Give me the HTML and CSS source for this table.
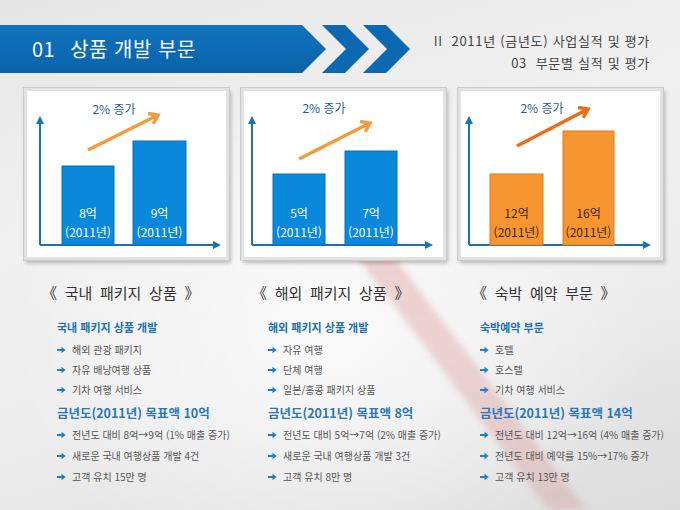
FILE: index.html
```html
<!DOCTYPE html>
<html lang="ko">
<head>
<meta charset="utf-8">
<title>01 상품 개발 부문</title>
<link rel="stylesheet" href="styles.css">
</head>
<body>
<div class="page">
  <div class="deco"><div class="band"></div></div>

  <header class="header">
    <div class="title-bar"><h1><span class="num">01</span>상품 개발 부문</h1></div>
    <svg class="chevrons" width="88" height="48" viewBox="0 0 88 48">
      <polygon points="0,0 23,0 47,24 23,48 0,48 24,24"/>
      <polygon points="41,0 64,0 88,24 64,48 41,48 65,24"/>
    </svg>
    <div class="crumbs">
      <p>II&nbsp; 2011년 (금년도) 사업실적 및 평가</p>
      <p>03&nbsp; 부문별 실적 및 평가</p>
    </div>
  </header>

  <section class="charts">
    <div class="chart">
      <svg width="199" height="166" viewBox="0 0 199 166">
        <g class="axis">
          <line x1="13" y1="28" x2="13" y2="154"/>
          <line x1="13" y1="154" x2="191" y2="154"/>
        </g>
        <polygon class="axis-head" points="9,33 13,25 17,33"/>
        <polygon class="axis-head" points="186,150 194,154 186,158"/>
        <rect class="bar" x="35" y="75" width="52" height="79"/>
        <rect class="bar" x="106" y="50" width="53" height="104"/>
        <text class="bar-text" x="61" y="127">8억</text>
        <text class="bar-text" x="61" y="146">(2011년)</text>
        <text class="bar-text" x="132.5" y="127">9억</text>
        <text class="bar-text" x="132.5" y="146">(2011년)</text>
        <text class="label" x="87" y="23">2% 증가</text>
        <line class="trend" x1="61" y1="59" x2="130" y2="24.5"/>
        <polyline class="trend" points="121.1,22.5 131,24 126.3,32.8"/>
      </svg>
    </div>
    <div class="chart">
      <svg width="199" height="166" viewBox="0 0 199 166">
        <g class="axis">
          <line x1="8" y1="28" x2="8" y2="154"/>
          <line x1="8" y1="154" x2="186" y2="154"/>
        </g>
        <polygon class="axis-head" points="4,33 8,25 12,33"/>
        <polygon class="axis-head" points="181,150 189,154 181,158"/>
        <rect class="bar" x="29" y="83" width="52" height="71"/>
        <rect class="bar" x="101" y="60" width="52" height="94"/>
        <text class="bar-text" x="55" y="127">5억</text>
        <text class="bar-text" x="55" y="146">(2011년)</text>
        <text class="bar-text" x="127" y="127">7억</text>
        <text class="bar-text" x="127" y="146">(2011년)</text>
        <text class="label" x="80" y="22">2% 증가</text>
        <line class="trend" x1="55" y1="68" x2="125" y2="32.5"/>
        <polyline class="trend" points="116.1,30.5 126,32 121.3,40.8"/>
      </svg>
    </div>
    <div class="chart">
      <svg width="199" height="166" viewBox="0 0 199 166">
        <g class="axis">
          <line x1="8" y1="28" x2="8" y2="154"/>
          <line x1="8" y1="154" x2="187" y2="154"/>
        </g>
        <polygon class="axis-head" points="4,33 8,25 12,33"/>
        <polygon class="axis-head" points="182,150 190,154 182,158"/>
        <rect class="bar bar--orange" x="29" y="83" width="53" height="71"/>
        <rect class="bar bar--orange" x="102" y="40" width="51" height="114"/>
        <text class="bar-text bar-text--dark" x="55.5" y="127">12억</text>
        <text class="bar-text bar-text--dark" x="55.5" y="146">(2011년)</text>
        <text class="bar-text bar-text--dark" x="127.5" y="127">16억</text>
        <text class="bar-text bar-text--dark" x="127.5" y="146">(2011년)</text>
        <text class="label" x="81" y="22">2% 증가</text>
        <line class="trend trend--dark" x1="56" y1="55" x2="126" y2="18.5"/>
        <polyline class="trend trend--dark" points="117.1,16.5 127,18 122.3,26.8"/>
      </svg>
    </div>
  </section>

  <section class="details">
    <div class="col">
      <h2 class="col-title col-title--a">《 국내 패키지 상품 》</h2>
      <h3 class="sub">국내 패키지 상품 개발</h3>
      <ul class="list">
        <li><svg class="bullet" viewBox="0 0 10 8"><path d="M0 2.8h5V0.3L9.6 4 5 7.7V5.2H0z"/></svg>해외 관광 패키지</li>
        <li><svg class="bullet" viewBox="0 0 10 8"><path d="M0 2.8h5V0.3L9.6 4 5 7.7V5.2H0z"/></svg>자유 배낭여행 상품</li>
        <li><svg class="bullet" viewBox="0 0 10 8"><path d="M0 2.8h5V0.3L9.6 4 5 7.7V5.2H0z"/></svg>기차 여행 서비스</li>
      </ul>
      <h3 class="goal">금년도(2011년) 목표액 10억</h3>
      <ul class="list list--goal">
        <li><svg class="bullet" viewBox="0 0 10 8"><path d="M0 2.8h5V0.3L9.6 4 5 7.7V5.2H0z"/></svg>전년도 대비 8억→9억 (1% 매출 증가)</li>
        <li><svg class="bullet" viewBox="0 0 10 8"><path d="M0 2.8h5V0.3L9.6 4 5 7.7V5.2H0z"/></svg>새로운 국내 여행상품 개발 4건</li>
        <li><svg class="bullet" viewBox="0 0 10 8"><path d="M0 2.8h5V0.3L9.6 4 5 7.7V5.2H0z"/></svg>고객 유치 15만 명</li>
      </ul>
    </div>
    <div class="col">
      <h2 class="col-title col-title--b">《 해외 패키지 상품 》</h2>
      <h3 class="sub">해외 패키지 상품 개발</h3>
      <ul class="list">
        <li><svg class="bullet" viewBox="0 0 10 8"><path d="M0 2.8h5V0.3L9.6 4 5 7.7V5.2H0z"/></svg>자유 여행</li>
        <li><svg class="bullet" viewBox="0 0 10 8"><path d="M0 2.8h5V0.3L9.6 4 5 7.7V5.2H0z"/></svg>단체 여행</li>
        <li><svg class="bullet" viewBox="0 0 10 8"><path d="M0 2.8h5V0.3L9.6 4 5 7.7V5.2H0z"/></svg>일본/홍콩 패키지 상품</li>
      </ul>
      <h3 class="goal">금년도(2011년) 목표액 8억</h3>
      <ul class="list list--goal">
        <li><svg class="bullet" viewBox="0 0 10 8"><path d="M0 2.8h5V0.3L9.6 4 5 7.7V5.2H0z"/></svg>전년도 대비 5억→7억 (2% 매출 증가)</li>
        <li><svg class="bullet" viewBox="0 0 10 8"><path d="M0 2.8h5V0.3L9.6 4 5 7.7V5.2H0z"/></svg>새로운 국내 여행상품 개발 3건</li>
        <li><svg class="bullet" viewBox="0 0 10 8"><path d="M0 2.8h5V0.3L9.6 4 5 7.7V5.2H0z"/></svg>고객 유치 8만 명</li>
      </ul>
    </div>
    <div class="col">
      <h2 class="col-title col-title--c">《 숙박 예약 부문 》</h2>
      <h3 class="sub">숙박예약 부문</h3>
      <ul class="list">
        <li><svg class="bullet" viewBox="0 0 10 8"><path d="M0 2.8h5V0.3L9.6 4 5 7.7V5.2H0z"/></svg>호텔</li>
        <li><svg class="bullet" viewBox="0 0 10 8"><path d="M0 2.8h5V0.3L9.6 4 5 7.7V5.2H0z"/></svg>호스텔</li>
        <li><svg class="bullet" viewBox="0 0 10 8"><path d="M0 2.8h5V0.3L9.6 4 5 7.7V5.2H0z"/></svg>기차 여행 서비스</li>
      </ul>
      <h3 class="goal">금년도(2011년) 목표액 14억</h3>
      <ul class="list list--goal">
        <li><svg class="bullet" viewBox="0 0 10 8"><path d="M0 2.8h5V0.3L9.6 4 5 7.7V5.2H0z"/></svg>전년도 대비 12억→16억 (4% 매출 증가)</li>
        <li><svg class="bullet" viewBox="0 0 10 8"><path d="M0 2.8h5V0.3L9.6 4 5 7.7V5.2H0z"/></svg>전년도 대비 예약률 15%→17% 증가</li>
        <li><svg class="bullet" viewBox="0 0 10 8"><path d="M0 2.8h5V0.3L9.6 4 5 7.7V5.2H0z"/></svg>고객 유치 13만 명</li>
      </ul>
    </div>
  </section>
</div>
</body>
</html>
```

FILE: styles.css
```css
* { box-sizing: border-box; }

html, body {
  margin: 0;
  padding: 0;
}

body {
  width: 680px;
  height: 510px;
  overflow: hidden;
  font-family: "Noto Sans CJK KR", "Noto Sans", sans-serif;
}

.page {
  position: relative;
  width: 680px;
  height: 510px;
  overflow: hidden;
  background:
    radial-gradient(ellipse 320px 260px at 330px 330px, rgba(255,255,255,0.75), rgba(255,255,255,0) 100%),
    linear-gradient(165deg, #e6e6e6 0%, #f1f1f1 35%, #ededed 65%, #dcdcdc 100%);
}

.deco {
  position: absolute;
  inset: 0;
  filter: blur(3px);
  z-index: 0;
  pointer-events: none;
}

.band {
  position: absolute;
  inset: 0;
  clip-path: polygon(344px 240px, 381px 240px, 594px 520px, 556px 520px);
  background: linear-gradient(180deg, rgba(205,70,70,0.32) 0%, rgba(205,80,80,0.22) 60%, rgba(205,80,80,0.18) 100%);
}

/* Header */
.header {
  position: relative;
  z-index: 1;
  display: flex;
  align-items: center;
  height: 48px;
  margin-top: 25px;
}

.title-bar {
  width: 326px;
  height: 48px;
  flex: none;
  background: linear-gradient(180deg, #1174bd 0%, #0b69b2 60%, #0a63a9 100%);
  clip-path: polygon(0 0, 302px 0, 326px 50%, 302px 100%, 0 100%);
}

.title-bar h1 {
  margin: 0;
  padding-left: 32px;
  font-size: 20px;
  font-weight: normal;
  line-height: 48px;
  color: #ffffff;
  letter-spacing: 0.5px;
  white-space: nowrap;
}

.title-bar .num {
  margin-right: 15px;
}

.chevrons {
  flex: none;
  margin-left: -4px;
  fill: #0b69b2;
}

.crumbs {
  margin-left: auto;
  margin-right: 30px;
  padding-top: 5px;
  text-align: right;
}

.crumbs p {
  margin: 0;
  font-size: 13px;
  line-height: 22px;
  color: #444444;
  letter-spacing: 0.7px;
  white-space: nowrap;
}

/* Charts */
.charts {
  position: relative;
  z-index: 1;
  display: flex;
  gap: 12px;
  margin-top: 15px;
  padding-left: 24px;
}

.chart {
  width: 205px;
  height: 172px;
  background: #ffffff;
  border: 3px solid #e2e2e2;
  box-shadow: 0 0 0 1px #cbcbcb, 2px 3px 4px rgba(0, 0, 0, 0.25);
}

.chart svg {
  display: block;
  font-family: "Noto Sans CJK KR", "Noto Sans", sans-serif;
}

.axis line {
  stroke: #1b72b6;
  stroke-width: 2;
}

.axis-head {
  fill: #1b72b6;
}

.bar {
  fill: #0a88db;
  stroke: #0b6fb8;
  stroke-width: 1;
}

.bar--orange {
  fill: #f7952f;
  stroke: #e47b1d;
}

.bar-text {
  font-size: 12px;
  fill: #ffffff;
  text-anchor: middle;
}

.bar-text--dark {
  fill: #3b2a1c;
}

.label {
  font-size: 12px;
  fill: #1d5f98;
  text-anchor: middle;
}

.trend {
  fill: none;
  stroke: #f39b3d;
  stroke-width: 3.5;
  stroke-linecap: butt;
  stroke-linejoin: miter;
}

.trend--dark {
  stroke: #ee6c14;
}

/* Details */
.details {
  position: relative;
  z-index: 1;
  display: grid;
  grid-template-columns: 211px 212px 1fr;
  margin-top: 20px;
  padding-left: 57px;
}

.col-title {
  margin: 0;
  font-size: 15px;
  font-weight: normal;
  line-height: 26px;
  color: #333333;
  word-spacing: 3.5px;
  white-space: nowrap;
}

.col-title--a { margin-left: -15px; }
.col-title--b { margin-left: -16px; }
.col-title--c { margin-left: -8px; }

.sub {
  margin: 12px 0 0;
  font-size: 11px;
  font-weight: bold;
  line-height: 18px;
  color: #2270b0;
  white-space: nowrap;
}

.goal {
  margin: 2px 0 0;
  font-size: 12.5px;
  font-weight: bold;
  line-height: 22px;
  color: #2a78b9;
  white-space: nowrap;
}

.list {
  margin: 4px 0 0;
  padding: 0;
  list-style: none;
}

.list li {
  display: flex;
  align-items: center;
  gap: 6px;
  font-size: 10px;
  line-height: 20px;
  color: #555555;
  white-space: nowrap;
}

.list--goal {
  margin-top: 0;
}

.list--goal li {
  line-height: 21px;
}

.bullet {
  width: 9px;
  height: 8px;
  flex: none;
  fill: #1f7fc4;
}
```
